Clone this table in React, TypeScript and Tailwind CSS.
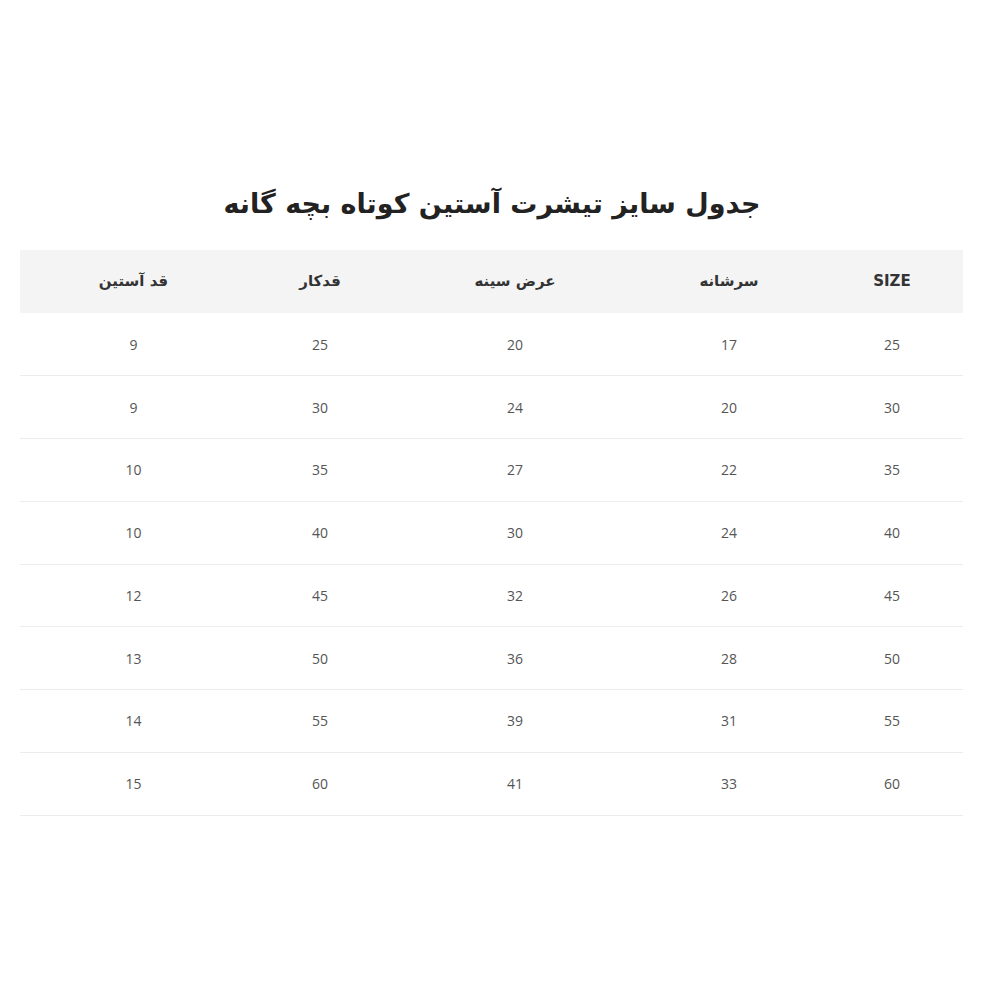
const headers = ["SIZE", "سرشانه", "عرض سینه", "قدکار", "قد آستین"];

const rows = [
  [25, 17, 20, 25, 9],
  [30, 20, 24, 30, 9],
  [35, 22, 27, 35, 10],
  [40, 24, 30, 40, 10],
  [45, 26, 32, 45, 12],
  [50, 28, 36, 50, 13],
  [55, 31, 39, 55, 14],
  [60, 33, 41, 60, 15],
];

const widths = ["w-[142px]", "w-[184px]", "w-[244px]", "w-[146px]", "w-[227px]"];

export default function App() {
  return (
    <div className="min-h-[1000px] bg-white pt-[179px] font-['DejaVu_Sans',sans-serif]" dir="rtl">
      <h1 className="mb-[21px] pr-[16px] text-center text-[27px] font-bold leading-[50px] text-[#222]">
        جدول سایز تیشرت آستین کوتاه بچه گانه
      </h1>
      <table className="mr-[37px] w-[943px] table-fixed border-collapse">
        <thead>
          <tr className="h-[63px] bg-[#f4f4f4]">
            {headers.map((h, i) => (
              <th
                key={h}
                className={`${widths[i]} text-center text-[15px] font-semibold text-[#333]`}
              >
                {h}
              </th>
            ))}
          </tr>
        </thead>
        <tbody>
          {rows.map((r, ri) => (
            <tr key={ri} className="h-[62.75px] border-b border-[#ececec]">
              {r.map((v, ci) => (
                <td
                  key={ci}
                  className="text-center text-[14px] text-[#555] font-['Open_Sans',sans-serif]"
                >
                  {v}
                </td>
              ))}
            </tr>
          ))}
        </tbody>
      </table>
    </div>
  );
}
